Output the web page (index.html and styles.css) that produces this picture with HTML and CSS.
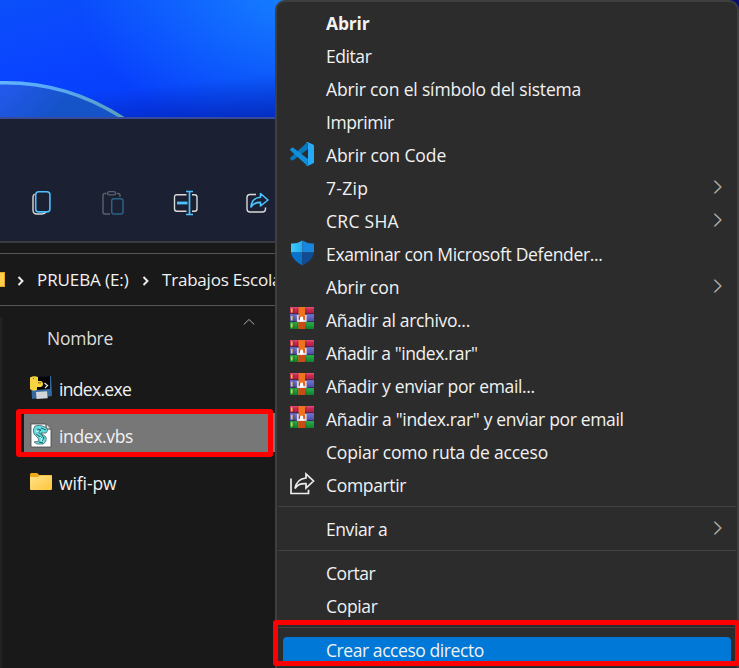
FILE: index.html
```
<!DOCTYPE html>
<html lang="es">
<head>
<meta charset="utf-8">
<title>Explorador</title>
<link rel="stylesheet" href="styles.css">
</head>
<body>
<svg width="0" height="0" class="defs" aria-hidden="true">
  <defs>
    <linearGradient id="folder" x1="0" y1="0" x2="1" y2="1"><stop offset="0" stop-color="#ffe08a"/><stop offset="1" stop-color="#ffc73a"/></linearGradient>
    <linearGradient id="red" x1="0" y1="0" x2="0" y2="1"><stop offset="0" stop-color="#e8557c"/><stop offset=".3" stop-color="#cf2a55"/><stop offset="1" stop-color="#a91d42"/></linearGradient>
    <linearGradient id="violet" x1="0" y1="0" x2="0" y2="1"><stop offset="0" stop-color="#7478d4"/><stop offset="1" stop-color="#4549a4"/></linearGradient>
    <linearGradient id="green" x1="0" y1="0" x2="0" y2="1"><stop offset="0" stop-color="#28b24b"/><stop offset="1" stop-color="#12802e"/></linearGradient>
    <linearGradient id="shine" x1="0" y1="0" x2="1" y2="0"><stop offset="0" stop-color="#3dcbfa"/><stop offset="1" stop-color="#28a9ee"/></linearGradient>
    <linearGradient id="arc" gradientUnits="userSpaceOnUse" x1="0" y1="0" x2="126" y2="0"><stop offset="0" stop-color="#62b4ff"/><stop offset=".4" stop-color="#58aaf8"/><stop offset="1" stop-color="#5b9eb8"/></linearGradient>
    <linearGradient id="bubble" gradientUnits="userSpaceOnUse" x1="0" y1="82" x2="40" y2="125"><stop offset="0" stop-color="#2559ef"/><stop offset="1" stop-color="#1553c9"/></linearGradient>
    <symbol id="rar" viewBox="0 0 24 22">
      <rect width="24" height="7" fill="url(#red)"/><rect y="7" width="24" height="8" fill="url(#violet)"/><rect y="15" width="24" height="7" fill="url(#green)"/>
      <path d="M0 6.7h24M0 14.6h24" stroke="#342349" stroke-width=".8"/>
      <path d="M1.7 1.5v4M1.7 9v4.500M1.700 16.500v4" stroke="#f0c43c" stroke-width="1.700"/>
      <path d="M4 0v22M7.500 0v22M16 0v22" stroke="#222" stroke-opacity=".25"/>
      <rect x="8.500" width="6.500" height="22" fill="#ed741d"/><rect x="8.500" y="15" width="6.500" height="7" fill="#c84c16"/>
      <path d="M7.800 8v6h8V8" fill="none" stroke="#ddd5df" stroke-width="1.800"/>
      <path d="M10 14.500v-3q0-2 1.700-2t1.700 2v3z" fill="#fff"/>
      <path d="M9.500 9.500v3M14 9.500v3" stroke="#c63d2a"/>
    </symbol>
    <symbol id="next" viewBox="0 0 10 14"><path d="M.8 .8 7.200 7 .8 13.300" fill="none" stroke="#4aa6ea" stroke-width=".8"/><path d="M2.100 .8 8.500 7l-6.400 6.300" fill="none" stroke="#ee9a48" stroke-width=".9"/><path d="M1.400 .8 7.800 7l-6.400 6.300" fill="none" stroke="#eee" stroke-width=".6"/></symbol>
  </defs>
</svg>
<div class="desktop">
  <main class="left">
    <div class="wallpaper">
      <svg width="275" height="117" viewBox="0 0 275 117"><path d="M-2 82.500C44 81 87 94 126 120H-2z" fill="url(#bubble)"/><path d="M-2 82.800C44 81.300 87 94 126 120" fill="none" stroke="url(#arc)" stroke-width="3.400"/></svg>
    </div>
    <div class="toolbar">
      <svg class="copy" width="26" height="28" viewBox="0 0 26 28" fill="none"><path d="M5.700 5C4 6 4 7 4 8v13q0 4 4 4h5q3 0 4-1.800" stroke="#d9d9d9" stroke-width="1.400"/><rect x="6.700" y="2.700" width="14.200" height="20.200" rx="3" stroke="#4cc2ff" stroke-width="1.600"/></svg>
      <svg class="paste" width="26" height="28" viewBox="0 0 26 28" fill="none"><path d="M6.500 4.500H5q-2 0-2 2V23q0 2 2 2h5M16.500 4.500H18q2 0 2 2V8" stroke="#5d606c" stroke-width="1.400"/><rect x="7.500" y="2.700" width="8" height="3.200" rx="1.600" stroke="#5d606c" stroke-width="1.300"/><rect x="11.700" y="9.700" width="11.300" height="15.300" rx="2.300" stroke="#2b6286" stroke-width="1.500"/></svg>
      <svg class="rename" width="26" height="28" viewBox="0 0 26 28" fill="none"><path d="M13.500 5.700H4q-2.500 0-2.500 2.500v11.500q0 2.500 2.500 2.500h9.500M19 5.700h2.500q2.500 0 2.500 2.500v11.500q0 2.500-2.500 2.500H19" stroke="#d9d9d9" stroke-width="1.400"/><path d="M4 14h10.500" stroke="#4cc2ff" stroke-width="2.800"/><path d="M13 2.500h7M13 25.500h7M16.500 2.500v23" stroke="#4cc2ff" stroke-width="1.700"/></svg>
      <svg class="share" width="26" height="28" viewBox="0 0 26 28" fill="none"><path d="M11 5.500H5q-3 0-3 3V20q0 3 3 3h12.500q3 0 3-3v-1.500" stroke="#d9d9d9" stroke-width="1.400"/><path d="M15.500 8.300V4.500L23 11l-7.500 6v-3.600c-5-.2-7.500 1.400-9.500 4.600.4-6 3.700-9.300 9.500-9.700z" stroke="#4cc2ff" stroke-width="1.600" stroke-linejoin="round"/></svg>
    </div>
    <div class="address">
      <span class="drive"></span>
      <svg class="crumb" width="8" height="12" viewBox="0 0 8 12"><path d="m1.500 2 4 4-4 4" fill="none" stroke="#eee" stroke-width="1.900"/></svg>
      <span class="path-root">PRUEBA (E:)</span>
      <svg class="crumb" width="8" height="12" viewBox="0 0 8 12"><path d="m1.500 2 4 4-4 4" fill="none" stroke="#eee" stroke-width="1.900"/></svg>
      <span class="path-dir">Trabajos Escola</span>
    </div>
    <div class="files">
      <div class="heading"><span>Nombre</span><svg width="12" height="8" viewBox="0 0 12 8"><path d="m.7 6.500 5.300-5 5.300 5" fill="none" stroke="#aaa"/></svg></div>
      <div class="file">
        <svg width="24" height="26" viewBox="0 0 24 26"><path d="M2 3 22 1l1 20-20 3z" fill="#35699f"/><path d="m6 2 15-1v13L7 15z" fill="#050505"/><path d="M1 2.500Q5 .5 9 2v4h3q2 .3 2 3t-2 3H8v3q-4 2-7-1z" fill="#f6d33f"/><path d="M4 3.500h1M9 7.800h3" stroke="#75601b"/><path d="m15.500 8 3 2.500-2.500 2.500" fill="none" stroke="#ddd" stroke-width="1.300"/><path d="m7 17 11-.8.700 7L7.500 24z" fill="#d1d4d8"/></svg>
        <span class="exe">index.exe</span>
      </div>
      <div class="file selected">
        <svg width="24" height="26" viewBox="0 0 24 26"><path d="M2 2h15l5 5v18H2z" fill="#fff" stroke="#454545" stroke-width=".8"/><path d="M17 2v5h5" fill="#ddd" stroke="#333"/><path d="M6 4q5-2 10 1l3 3-2 3h-5l5 4q1 5-3 7H8l-3-2 5-1-1-3-4-4q-2-4 1-8z" fill="#62dde0" stroke="#4c6669" stroke-width=".8"/><path d="m8 7 4 1-3 2 4 3 2 3-2 3M7 12l6 4M12 6l5 2M10 20l4 1" fill="none" stroke="#245055" stroke-width=".9"/><path d="m7 9 3 1M11 15l2 2-1 2" stroke="#dff" fill="none"/></svg>
        <span class="vbs">index.vbs</span>
      </div>
      <div class="file">
        <svg width="24" height="26" viewBox="0 0 24 26"><path d="M1 5.500q0-1.500 1.500-1.500H8l2.300 2H22q1 0 1 1v3H1z" fill="#f0a91b"/><path d="M1 8h7.500l2.500-1.500h12V20q0 1-1 1H2q-1 0-1-1z" fill="url(#folder)"/></svg>
        <span class="wifi">wifi-pw</span>
      </div>
    </div>
  </main>
  <div class="mark mark-file"></div>
  <nav class="menu">
    <div class="item"><b>Abrir</b></div>
    <div class="item tight"><span>Editar</span></div>
    <div class="item"><span>Abrir con el símbolo del sistema</span></div>
    <div class="item tight"><span>Imprimir</span></div>
    <div class="item"><svg class="icon" width="24" height="24" viewBox="0 0 24 24"><path d="m17.500 0-17 15.500q-.8 1 0 1.800l1.400 1q.7.500 1.400 0L18 7z" fill="#0878bd"/><path d="M17.500 24 .5 8.500q-.8-1 0-1.800l1.400-1q.7-.5 1.400 0L18 17z" fill="#118fd8"/><path d="m17.500 0 6 2.800q.5.300.5 1v16.400q0 .7-.5 1l-6 2.800q-.8.300-1.500-.5 2 0 2-1.500V2Q18 .5 16 .5q.7-.7 1.500-.5z" fill="#27a9f5"/></svg><span class="code">Abrir con Code</span></div>
    <div class="item wide"><span>7-Zip</span><svg class="next"><use href="#next"/></svg></div>
    <div class="item wide"><span>CRC SHA</span><svg class="next"><use href="#next"/></svg></div>
    <div class="item snug"><svg class="icon" width="24" height="26" viewBox="0 0 24 26"><path d="M1 3.500Q7 4 12.500.5V12.500H1z" fill="url(#shine)"/><path d="M12.500.5Q18 4 24 3.500v9H12.500z" fill="#1687dc"/><path d="M1 12.500h11.500v13Q2 20 1 12.500z" fill="#0872cc"/><path d="M12.500 12.500H24q-1 8-11.500 13z" fill="#124b94"/></svg><span>Examinar con Microsoft Defender...</span></div>
    <div class="item"><span>Abrir con</span><svg class="next"><use href="#next"/></svg></div>
    <div class="item snug"><svg class="icon rar"><use href="#rar"/></svg><span>Añadir al archivo...</span></div>
    <div class="item tight"><svg class="icon rar"><use href="#rar"/></svg><span>Añadir a "index.rar"</span></div>
    <div class="item snug"><svg class="icon rar"><use href="#rar"/></svg><span>Añadir y enviar por email...</span></div>
    <div class="item snug"><svg class="icon rar"><use href="#rar"/></svg><span>Añadir a "index.rar" y enviar por email</span></div>
    <div class="item path"><span>Copiar como ruta de acceso</span></div>
    <div class="item snug"><svg class="icon" width="25" height="24" viewBox="0 0 25 24"><path d="M1 6.500v15h17.500v-3.700M16 6V2l7.500 7-7.500 7v-4.300c-5.500-.3-9 1.300-11 4.800C6.200 9.700 10 6.500 16 6z" fill="none" stroke="#eee" stroke-width="1.700"/></svg><span>Compartir</span></div>
    <hr>
    <div class="item tight"><span>Enviar a</span><svg class="next"><use href="#next"/></svg></div>
    <hr>
    <div class="item tight"><span>Cortar</span></div>
    <div class="item snug"><span>Copiar</span></div>
    <hr>
    <div class="item tight active"><span>Crear acceso directo</span></div>
  </nav>
  <div class="mark mark-menu"></div>
</div>
</body>
</html>
```
FILE: styles.css
```
* { box-sizing: border-box; }
body { margin: 0; overflow: hidden; background: #191919; color: #f2f2f2; font: 17.5px/24px "Open Sans", "Noto Sans", sans-serif; }
svg { flex: none; display: block; }
.defs { position: absolute; }
.desktop { position: relative; display: flex; width: 739px; height: 668px; overflow: hidden; background: linear-gradient(#080f70, #080f70) right top / 20px 20px no-repeat, linear-gradient(#1580ff, #0c59fb) 265px 0 / 30px 30px no-repeat, #191919; }
.left { width: 275px; flex: none; white-space: nowrap; overflow: hidden; }
.wallpaper { height: 117px; background: linear-gradient(174deg, transparent 70%, rgba(0, 20, 140, .5) 100%), radial-gradient(ellipse 230px 160px at 305px -15px, #1785ff, rgba(23, 133, 255, 0)), linear-gradient(165deg, #0b4ffa 0%, #0943ff 45%, #043bf4 100%); }
.toolbar { height: 126px; border-top: 2px solid #374b9c; border-bottom: 2px solid #3b3b3f; background: #1b2032; display: flex; align-items: flex-start; gap: 46px; padding: 70px 0 0 28.500px; }
.paste { margin-left: -.5px; }
.rename { margin-left: .5px; }
.share { margin-left: .5px; }
.address { margin-top: 10px; height: 53px; border-top: 1px solid #555; border-bottom: 1px solid #555; display: flex; align-items: center; font-size: 17px; }
.address > * { flex: none; }
.drive { width: 5px; height: 15px; background: #ffcf4b; border: solid #e4a728; border-width: 1px 1px 1px 0; }
.crumb { margin-left: 12px; margin-top: 2px; }
.path-root { margin-left: 12px; width: 93px; letter-spacing: -.1px; }
.path-dir { margin-left: 12px; letter-spacing: -.2px; }
.files { height: 351px; margin-top: 11px; border-left: 2px solid #222; }
.heading { height: 49px; padding: 0 20px 0 45px; display: flex; justify-content: space-between; color: #ddd; }
.heading span { padding-top: 9px; letter-spacing: -.25px; }
.heading svg { margin-top: 1px; }
.file { height: 39px; margin-bottom: 8px; padding: 3px 0 0 27px; display: flex; align-items: center; gap: 6px; letter-spacing: -.1px; }
.file svg { margin-top: 2px; }
.file span { padding-top: 4px; }
.file .exe { letter-spacing: -.68px; }
.file .vbs { letter-spacing: -.35px; }
.selected { margin-left: 22px; padding-left: 5px; background: #777; }
.mark { position: absolute; border: 5px solid #f00; border-radius: 3px; }
.mark-file { left: 16px; top: 409px; width: 257px; height: 48px; }
.mark-menu { left: 273px; top: 620px; width: 467px; height: 46px; }
.menu { width: 464px; height: 680px; padding: 5px 0 0; border: 2px solid #3f3f3f; border-radius: 10px 10px 0 0; background: #2c2c2c; }
.item { height: 33px; padding: 0 14px 0 13px; display: grid; grid-template-columns: 36px 1fr 10px; align-items: center; white-space: nowrap; letter-spacing: -.16px; }
.item span, .item b { grid-column: 2; grid-row: 1; margin-top: -2px; }
.snug { letter-spacing: -.33px; }
.tight { letter-spacing: -.43px; }
.wide { letter-spacing: .28px; }
.path { letter-spacing: -.19px; }
.code { letter-spacing: -.08px; }
.icon { grid-column: 1; grid-row: 1; margin-top: -3px; }
.rar { width: 24px; height: 22px; margin-top: -5px; }
.next { width: 10px; height: 14px; grid-column: 3; grid-row: 1; margin-top: -4px; }
.menu hr { height: 1px; margin: 4px 1px 6px; border: 0; background: #434343; }
.active { height: 28px; margin: 9px 6px 0; padding: 0 8px 0 7px; border-radius: 4px; background: #0078d7; }
```
